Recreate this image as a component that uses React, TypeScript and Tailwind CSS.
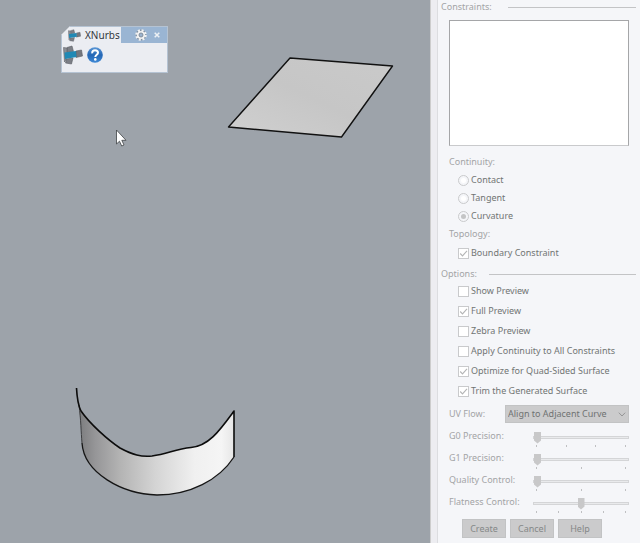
import {useState} from "react";
import type {ReactNode} from "react";

type SliderRow = {
    id: string;
    label: string;
    max: number;
    value: number;
};

const continuityModes = ["Contact", "Tangent", "Curvature"];

const options = [
    {label: "Show Preview", checked: false},
    {label: "Full Preview", checked: true},
    {label: "Zebra Preview", checked: false},
    {label: "Apply Continuity to All Constraints", checked: false},
    {label: "Optimize for Quad-Sided Surface", checked: true},
    {label: "Trim the Generated Surface", checked: true},
];

const sliders: SliderRow[] = [
    {id: "g0", label: "G0 Precision:", max: 3, value: 0},
    {id: "g1", label: "G1 Precision:", max: 2, value: 0},
    {id: "quality", label: "Quality Control:", max: 2, value: 0},
    {id: "flatness", label: "Flatness Control:", max: 4, value: 2},
];

const SurfaceIcon = ({className}: { className: string }) => (
    <svg viewBox="0 0 20 20" className={className} aria-hidden="true">
        <path d="M4 2.500 9 1 10.500 6.500 4 7.500Z" fill="#7c7f86" stroke="#5b5e65" strokeWidth="0.6"/>
        <path d="M3.500 14 10 13 8.500 19 2.500 18Z" fill="#7c7f86" stroke="#5b5e65" strokeWidth="0.6"/>
        <path d="M0.500 2.500 4 3 3 15 1.500 17Z" fill="#8c8f96" stroke="#5b5e65" strokeWidth="0.6"/>
        <path d="M13 6 18.500 5 19.500 11 13 12.500Z" fill="#74777e" stroke="#5b5e65" strokeWidth="0.6"/>
        <path d="M1.500 7.500 13 6 13.500 12 2 14Z" fill="#2089b5"/>
    </svg>
);

const HelpIcon = () => (
    <svg viewBox="0 0 16 16" className="size-4" aria-hidden="true">
        <defs>
            <linearGradient id="help" x1="0" y1="0" x2="0" y2="1">
                <stop offset="0" stopColor="#5b97d6"/>
                <stop offset="0.5" stopColor="#2467b5"/>
                <stop offset="1" stopColor="#3f8ad6"/>
            </linearGradient>
        </defs>
        <circle cx="8" cy="8" r="7.8" fill="url(#help)"/>
        <path d="M5.200 6.400C5 4.200 6.300 3.300 8 3.300s3 0.900 3 2.500c0 2-2.600 2-2.700 4.200" fill="none" stroke="#fff" strokeWidth="2"/>
        <circle cx="8.300" cy="12.400" r="1.300" fill="#fff"/>
    </svg>
);

const GearIcon = () => (
    <svg viewBox="0 0 12 12" className="size-3" aria-hidden="true">
        <circle cx="6" cy="6" r="5.4" fill="#8493a3"/>
        <circle cx="6" cy="6" r="4.6" fill="none" stroke="#f0f1f2" strokeWidth="2.4" strokeDasharray="2 1.61"/>
        <circle cx="6" cy="6" r="4.1" fill="#f0f1f2"/>
        <circle cx="6" cy="6" r="2" fill="#9ab3cf" stroke="#7c8793" strokeWidth="0.9"/>
    </svg>
);

const Toolbar = () => (
    <div className="absolute top-[26px] left-[61px] w-[107px] border border-[#b5c3d3] bg-[#ebedf2] pb-[7px] [clip-path:polygon(9px_0,100%_0,100%_100%,0_100%,0_9px)]">
        <div className="flex h-4 items-center">
            <div className="flex h-full w-[59px] items-center gap-1 pl-[6px] text-[10px] leading-4 text-[#33373c]">
                <SurfaceIcon className="size-[13px]"/>
                XNurbs
            </div>
            <div className="flex h-full flex-1 items-center justify-end gap-1 bg-[#9ab5d3] pr-1">
                <button type="button" aria-label="Toolbar options">
                    <GearIcon/>
                </button>
                <button type="button" aria-label="Close" className="grid size-3 place-items-center">
                    <svg viewBox="0 0 6 6" className="size-[6px]" aria-hidden="true">
                        <path d="M0.700 0.700 5.300 5.300M5.300 0.700 0.700 5.300" stroke="#edf1f5" strokeWidth="1.5"/>
                    </svg>
                </button>
            </div>
        </div>
        <div className="flex items-center gap-1 pt-[2px] pl-px">
            <button type="button" aria-label="Create surface">
                <SurfaceIcon className="size-5"/>
            </button>
            <button type="button" aria-label="Help">
                <HelpIcon/>
            </button>
        </div>
    </div>
);

// Shaded surfaces, plus the mouse pointer over the viewport
const Scene = () => (
    <svg viewBox="0 0 431 543" className="absolute top-0 left-0 h-[543px] w-[431px]" aria-hidden="true">
        <defs>
            <linearGradient id="plane" x1="0" y1="1" x2="1" y2="0">
                <stop offset="0" stopColor="#d0d0d0"/>
                <stop offset="0.5" stopColor="#c6c6c6"/>
                <stop offset="1" stopColor="#cacaca"/>
            </linearGradient>
            <linearGradient id="band">
                <stop offset="0" stopColor="#77787a"/>
                <stop offset="0.12" stopColor="#969698"/>
                <stop offset="0.28" stopColor="#b4b4b4"/>
                <stop offset="0.5" stopColor="#d4d4d4"/>
                <stop offset="0.75" stopColor="#f0f0f0"/>
                <stop offset="0.92" stopColor="#f5f5f5"/>
                <stop offset="1" stopColor="#e6e6e6"/>
            </linearGradient>
        </defs>
        <path d="M290 58 392.500 66 341.500 137 228.500 127Z" fill="url(#plane)" stroke="#111" strokeWidth="1.4" strokeLinejoin="round"/>
        <path
            d="M76.500 388C77 398 78 405 81 411C90 424 108 440 120 448C133 455 141 457 152 456C168 454 175 449 191 447.500C209 446 220 430 234 411V457C219 480 190 495 157 495C122 494 84 473 82 443C82 430 79 410 76.500 388Z"
            fill="url(#band)"
        />
        <path d="M79 405C81 420 81 432 82 443" fill="none" stroke="#3b3c3e" strokeWidth="1"/>
        <path d="M82 443C84 473 122 494 157 495C190 495 219 480 234 457" fill="none" stroke="#151515" strokeWidth="1.3"/>
        <path
            d="M76.500 388C77 398 78 405 81 411C90 424 108 440 120 448C133 455 141 457 152 456C168 454 175 449 191 447.500C209 446 220 430 234 411V457"
            fill="none"
            stroke="#0c0c0c"
            strokeWidth="1.6"
            strokeLinejoin="round"
        />
        <path d="M116.500 130V144L119.500 141.200 121.700 146 124 145 121.800 140.300H126Z" fill="#fff" stroke="#3f4245" strokeWidth="0.8"/>
    </svg>
);

const SectionHeader = ({children, gap}: { children: ReactNode; gap: string }) => (
    <div className={`flex h-[14px] items-center pr-1 ${gap}`}>
        <h2 className="text-[#a3a4a6]">{children}</h2>
        <div className="h-px flex-1 bg-[#c3c4c6]"/>
    </div>
);

const CheckOption = ({label, initial}: { label: string; initial: boolean }) => {
    const [checked, setChecked] = useState<boolean>(initial);

    return (
        <label className="flex h-5 items-center gap-[2px] pl-[17px] text-[#717574]">
            <span className="grid">
                <input
                    type="checkbox"
                    checked={checked}
                    onChange={(e) => setChecked(e.target.checked)}
                    className="peer col-start-1 row-start-1 size-[11px] appearance-none border border-[#c9cacc] bg-white"
                />
                <svg viewBox="0 0 11 11" className="pointer-events-none invisible col-start-1 row-start-1 size-[11px] peer-checked:visible">
                    <path d="M2.200 5.500 4.500 7.900 9 2.800" fill="none" stroke="#b4b5b6" strokeWidth="1.1"/>
                </svg>
            </span>
            {label}
        </label>
    );
};

const PrecisionSlider = ({id, label, max, value}: SliderRow) => {
    const [current, setCurrent] = useState<number>(value);

    return (
        <div className="flex h-[22px] items-center pr-[11px] pl-2 text-[#a3a4a6]">
            <label htmlFor={id} className="w-[84px]">{label}</label>
            <div className="flex h-full flex-1 flex-col gap-[2px] pt-[6px]">
                <input
                    id={id}
                    type="range"
                    min={0}
                    max={max}
                    value={current}
                    onChange={(e) => setCurrent(Number(e.target.value))}
                    className="h-3 w-full appearance-none bg-transparent [&::-webkit-slider-runnable-track]:h-[3px] [&::-webkit-slider-runnable-track]:border [&::-webkit-slider-runnable-track]:border-[#d4d5d7] [&::-webkit-slider-runnable-track]:bg-[#e9eaec] [&::-webkit-slider-thumb]:-mt-[5px] [&::-webkit-slider-thumb]:h-3 [&::-webkit-slider-thumb]:w-[7px] [&::-webkit-slider-thumb]:appearance-none [&::-webkit-slider-thumb]:bg-[#c8c8c9] [&::-webkit-slider-thumb]:[clip-path:polygon(0_0,100%_0,100%_75%,50%_100%,0_75%)]"
                />
                <div className="flex justify-between px-[3px]">
                    {Array.from({length: max + 1}, (_, i) => (
                        <span key={i} className="h-[2px] w-px bg-[#bfc0c2]"/>
                    ))}
                </div>
            </div>
        </div>
    );
};

const PanelButton = ({children}: { children: ReactNode }) => (
    <button type="button" className="h-[19px] w-11 border border-[#c2c3c4] bg-[#cbcbcc] text-[#858888]">
        {children}
    </button>
);

const App = () => {
    const [continuity, setContinuity] = useState<string>("Curvature");

    return (
        <div className="flex min-h-screen overflow-hidden bg-[#f5f6f9] font-['Noto_Sans','Open_Sans',sans-serif] text-[9px] leading-3">
            <main className="relative flex-1 overflow-hidden bg-[#9da3aa]">
                <Scene/>
                <Toolbar/>
            </main>

            <aside className="flex w-[210px] shrink-0">
                <div className="w-2 border-x border-r-[#dcdde0] border-l-[#cdcdcd] bg-[#ededf1]"/>
                <form className="flex flex-1 flex-col pl-[3px]" onSubmit={(e) => e.preventDefault()}>
                    <SectionHeader gap="gap-4">Constraints:</SectionHeader>
                    <ul aria-label="Constraints" className="mt-[6px] mr-[11px] ml-2 h-[126px] border border-[#a5a6a8] border-b-[#c9cacc] bg-white"/>

                    <fieldset className="mt-[7px]">
                        <legend className="h-[18px] pl-2 leading-[18px] text-[#a3a4a6]">Continuity:</legend>
                        {continuityModes.map((mode) => (
                            <label key={mode} className="flex h-[18px] items-center gap-[2px] pl-[17px] text-[#717574]">
                                <input
                                    type="radio"
                                    name="continuity"
                                    checked={continuity === mode}
                                    onChange={() => setContinuity(mode)}
                                    className="size-[11px] appearance-none rounded-full border border-[#c9cacc] bg-white bg-clip-content p-[2px] checked:bg-[#c4c5c6]"
                                />
                                {mode}
                            </label>
                        ))}
                    </fieldset>

                    <fieldset>
                        <legend className="h-[18px] pl-2 leading-[18px] text-[#a3a4a6]">Topology:</legend>
                        <CheckOption label="Boundary Constraint" initial={true}/>
                    </fieldset>

                    <div className="mt-1">
                        <SectionHeader gap="gap-3">Options:</SectionHeader>
                        {options.map((option) => (
                            <CheckOption key={option.label} label={option.label} initial={option.checked}/>
                        ))}
                    </div>

                    <div className="mt-1 flex h-[18px] items-center pr-[11px] pl-2">
                        <label htmlFor="uv" className="w-14 text-[#a3a4a6]">UV Flow:</label>
                        <div className="grid flex-1 items-center">
                            <select id="uv" className="col-start-1 row-start-1 h-[18px] w-full appearance-none border border-[#c2c3c4] bg-[#cbcbcc] pl-[2px] text-[#6f7272]">
                                <option>Align to Adjacent Curve</option>
                            </select>
                            <svg viewBox="0 0 8 5" className="pointer-events-none col-start-1 row-start-1 mr-[3px] h-[5px] w-2 justify-self-end">
                                <path d="M0.800 0.700 4 4 7.200 0.700" fill="none" stroke="#8e9091" strokeWidth="0.9"/>
                            </svg>
                        </div>
                    </div>

                    <div className="mt-[2px]">
                        {sliders.map((slider) => (
                            <PrecisionSlider key={slider.id} {...slider}/>
                        ))}
                    </div>

                    <div className="mt-[6px] flex gap-1 pb-1 pl-[21px]">
                        <PanelButton>Create</PanelButton>
                        <PanelButton>Cancel</PanelButton>
                        <PanelButton>Help</PanelButton>
                    </div>
                </form>
            </aside>
        </div>
    );
};

export default App;
